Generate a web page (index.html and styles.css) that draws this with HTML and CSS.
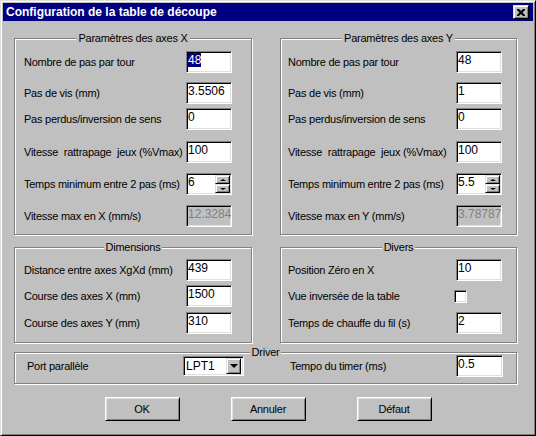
FILE: index.html
```html
<!DOCTYPE html>
<html>
<head>
<title>Configuration de la table de découpe</title>
<link rel="stylesheet" href="styles.css">
</head>
<body>
<div class="window">
  <div class="titlebar">
    <span class="title">Configuration de la table de découpe</span>
    <span class="close">
      <svg width="8" height="7" viewBox="0 0 8 7"><path d="M0 0h2l2 2 2-2h2v1l-2.5 2.5L8 6v1H6L4 5 2 7H0V6l2.5-2.5L0 1z" fill="#000"/></svg>
    </span>
  </div>

  <div class="content">
    <div class="pair top">
      <div class="group axes axes-x">
        <div class="group-title">Paramètres des axes X</div>
        <div class="row"><span class="label">Nombre de pas par tour</span><div class="field"><span class="selected">48</span></div></div>
        <div class="row"><span class="label">Pas de vis (mm)</span><div class="field">3.5506</div></div>
        <div class="row"><span class="label">Pas perdus/inversion de sens</span><div class="field">0</div></div>
        <div class="row"><span class="label">Vitesse  rattrapage  jeux (%Vmax)</span><div class="field">100</div></div>
        <div class="row"><span class="label">Temps minimum entre 2 pas (ms)</span>
          <div class="field spin"><span>6</span><div class="spin-btns"><div class="spin-btn up"></div><div class="spin-btn down"></div></div></div>
        </div>
        <div class="row"><span class="label">Vitesse max en X (mm/s)</span><div class="field disabled">12.3284</div></div>
      </div>

      <div class="group axes axes-y">
        <div class="group-title">Paramètres des axes Y</div>
        <div class="row"><span class="label">Nombre de pas par tour</span><div class="field">48</div></div>
        <div class="row"><span class="label">Pas de vis (mm)</span><div class="field">1</div></div>
        <div class="row"><span class="label">Pas perdus/inversion de sens</span><div class="field">0</div></div>
        <div class="row"><span class="label">Vitesse  rattrapage  jeux (%Vmax)</span><div class="field">100</div></div>
        <div class="row"><span class="label">Temps minimum entre 2 pas (ms)</span>
          <div class="field spin"><span>5.5</span><div class="spin-btns"><div class="spin-btn up"></div><div class="spin-btn down"></div></div></div>
        </div>
        <div class="row"><span class="label">Vitesse max en Y (mm/s)</span><div class="field disabled">3.78787</div></div>
      </div>
    </div>

    <div class="pair mid">
      <div class="group small dims">
        <div class="group-title">Dimensions</div>
        <div class="row"><span class="label">Distance entre axes XgXd (mm)</span><div class="field">439</div></div>
        <div class="row"><span class="label">Course des axes X (mm)</span><div class="field">1500</div></div>
        <div class="row"><span class="label">Course des axes Y (mm)</span><div class="field">310</div></div>
      </div>

      <div class="group small misc">
        <div class="group-title">Divers</div>
        <div class="row"><span class="label">Position Zéro en X</span><div class="field">10</div></div>
        <div class="row"><span class="label">Vue inversée de la table</span><div class="checkbox"></div></div>
        <div class="row"><span class="label">Temps de chauffe du fil (s)</span><div class="field">2</div></div>
      </div>
    </div>

    <div class="group driver">
      <div class="group-title">Driver</div>
      <div class="row">
        <span class="label port">Port parallèle</span>
        <div class="select"><span>LPT1</span><div class="drop"></div></div>
        <span class="label tempo">Tempo du timer (ms)</span>
        <div class="field wide">0.5</div>
      </div>
    </div>

    <div class="buttons">
      <div class="btn">OK</div>
      <div class="btn">Annuler</div>
      <div class="btn">Défaut</div>
    </div>
  </div>
</div>
</body>
</html>
```

FILE: styles.css
```css
* {
  margin: 0;
  padding: 0;
  box-sizing: border-box;
}

body {
  background: #c0c0c0;
  font-family: "Liberation Sans", Arial, sans-serif;
  font-size: 11px;
  letter-spacing: -0.25px;
  color: #000;
}

.window {
  width: 536px;
  height: 436px;
  padding: 2px;
  background: #c0c0c0;
  border: 1px solid;
  border-color: #dfdfdf #000 #000 #dfdfdf;
  box-shadow: inset 1px 1px #fff, inset -1px -1px #808080;
}

.titlebar {
  height: 18px;
  background: #000080;
  color: #fff;
  display: flex;
  align-items: center;
  justify-content: space-between;
  padding: 0 4px 0 3px;
}

.title {
  font-weight: bold;
  font-size: 12px;
  letter-spacing: 0;
}

.close {
  width: 16px;
  height: 14px;
  display: flex;
  align-items: center;
  justify-content: center;
  background: #c0c0c0;
  border: 1px solid;
  border-color: #dfdfdf #000 #000 #dfdfdf;
  box-shadow: inset 1px 1px #fff, inset -1px -1px #808080;
}

.content {
  padding: 17px 11px 0 11px;
}

.pair {
  display: flex;
  gap: 28px;
}

.mid {
  margin-top: 12px;
}

/* etched group box */
.group {
  border: 1px solid #808080;
  box-shadow: inset 1px 1px #fff, 1px 1px #fff;
}

.group-title {
  display: table;
  margin: -8px auto 0;
  padding: 0 2px;
  line-height: 14px;
  background: #c0c0c0;
}

.axes-x { width: 238px; height: 197px; }
.axes-y { width: 237px; height: 197px; }
.dims { width: 238px; height: 96px; }
.misc { width: 237px; height: 96px; }

.row {
  display: flex;
  align-items: center;
  height: 22px;
}

.label {
  white-space: pre;
}

.axes-x .row, .dims .row { padding-left: 9px; }
.axes-x .label, .dims .label { width: 162px; }
.axes-y .row, .misc .row { padding-left: 7px; }
.axes-y .label, .misc .label { width: 168px; }

.axes .row:nth-child(2) { margin-top: 6px; }
.axes .row:nth-child(3) { margin-top: 9px; }
.axes .row:nth-child(4) { margin-top: 4px; }
.axes .row:nth-child(5) { margin-top: 11px; }
.axes .row:nth-child(6) { margin-top: 10px; }
.axes .row:nth-child(7) { margin-top: 10px; }

.small .row:nth-child(2) { margin-top: 5px; }
.small .row:nth-child(3) { margin-top: 4px; }
.small .row:nth-child(4) { margin-top: 5px; }

.field {
  width: 46px;
  height: 22px;
  padding: 0 1px;
  background: #fff;
  border: 1px solid;
  border-color: #808080 #fff #fff #808080;
  box-shadow: inset 1px 1px #000, inset -1px -1px #dfdfdf;
  font-size: 12px;
  letter-spacing: 0;
  line-height: 16px;
  white-space: nowrap;
  overflow: hidden;
}

.field.wide {
  width: 47px;
}

.field.disabled {
  background: #c0c0c0;
  color: #808080;
}

.selected {
  background: #000080;
  color: #fff;
}

.spin {
  display: flex;
}

.spin-btns {
  margin: 1px 0 1px auto;
  width: 15px;
  display: flex;
  flex-direction: column;
}

.spin-btn {
  flex: 1;
  display: flex;
  align-items: center;
  justify-content: center;
  background: #c0c0c0;
  border: 1px solid;
  border-color: #dfdfdf #000 #000 #dfdfdf;
  box-shadow: inset 1px 1px #fff, inset -1px -1px #808080;
}

.spin-btn::after {
  content: "";
  border-left: 3px solid transparent;
  border-right: 3px solid transparent;
}

.spin-btn.up::after { border-bottom: 2px solid #000; }
.spin-btn.down::after { border-top: 2px solid #000; }

.checkbox {
  width: 13px;
  height: 13px;
  margin-left: -2px;
  background: #fff;
  border: 1px solid;
  border-color: #808080 #fff #fff #808080;
  box-shadow: inset 1px 1px #000, inset -1px -1px #dfdfdf;
}

.driver {
  margin-top: 9px;
  width: 503px;
  height: 32px;
}

.driver .group-title {
  margin-bottom: -6px;
}

.driver .row {
  margin-top: 2px;
  padding-left: 12px;
}

.label.port { width: 156px; }
.label.tempo { width: 166px; margin-left: 46px; }

.select {
  width: 61px;
  height: 20px;
  display: flex;
  padding: 1px 2px 1px 1px;
  background: #fff;
  border: 1px solid;
  border-color: #808080 #fff #fff #808080;
  box-shadow: inset 1px 1px #000, inset -1px -1px #dfdfdf;
  font-size: 12px;
  letter-spacing: 0;
  line-height: 16px;
}

.select span {
  padding-left: 1px;
}

.drop {
  margin-left: auto;
  width: 15px;
  display: flex;
  align-items: center;
  justify-content: center;
  background: #c0c0c0;
  border: 1px solid;
  border-color: #dfdfdf #000 #000 #dfdfdf;
  box-shadow: inset 1px 1px #fff, inset -1px -1px #808080;
}

.drop::after {
  content: "";
  border-left: 4px solid transparent;
  border-right: 4px solid transparent;
  border-top: 4px solid #000;
}

.buttons {
  margin-top: 13px;
  display: flex;
  justify-content: center;
  gap: 51px;
}

.btn {
  width: 75px;
  height: 24px;
  display: flex;
  align-items: center;
  justify-content: center;
  background: #c0c0c0;
  border: 1px solid;
  border-color: #fff #000 #000 #fff;
  box-shadow: inset 1px 1px #dfdfdf, inset -1px -1px #808080;
}
```
